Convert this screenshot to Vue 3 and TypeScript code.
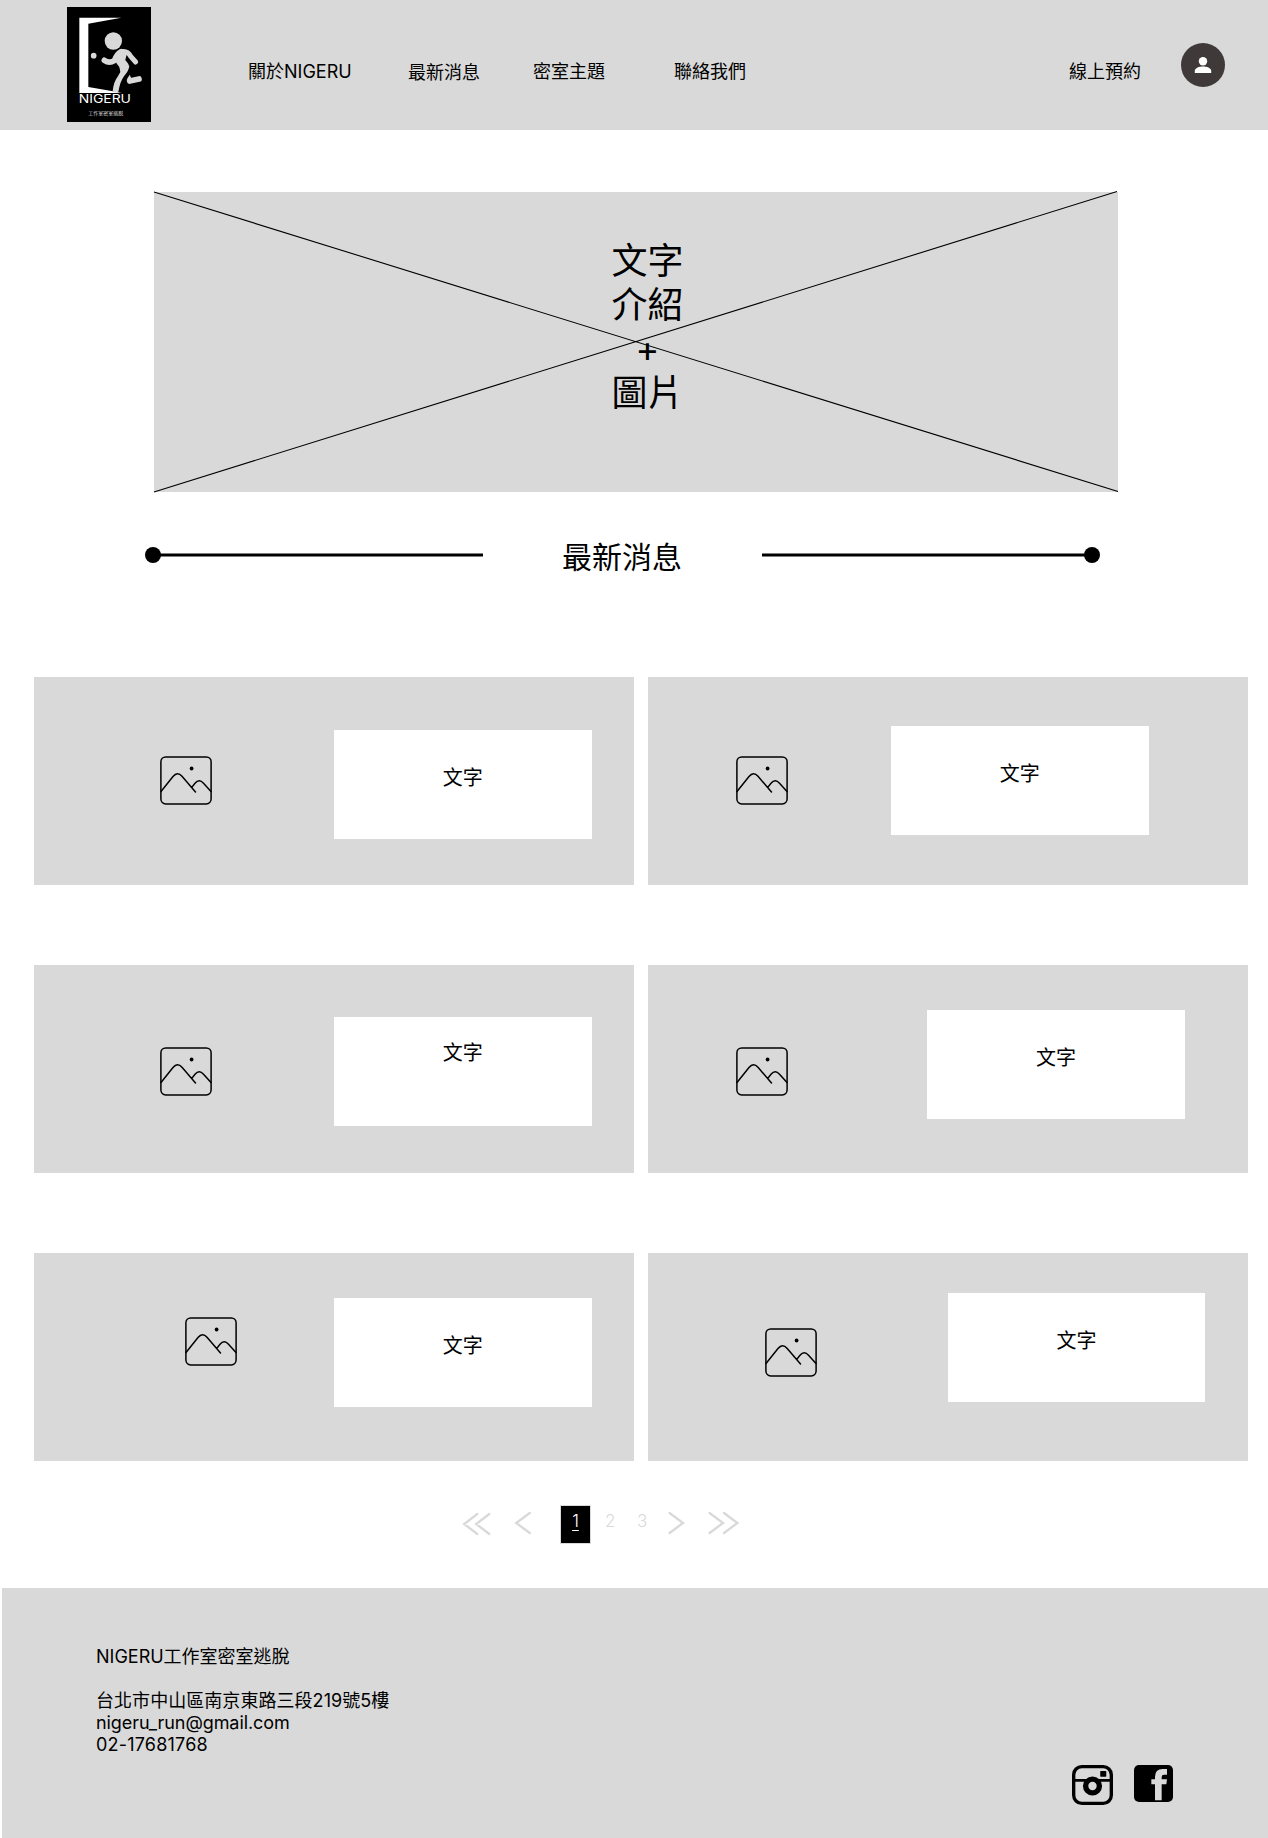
<script setup lang="ts">
interface NewsCard {
  id: string
  text: string
}

const navItems: string[] = ['關於NIGERU', '最新消息', '密室主題', '聯絡我們']
const introLines: string[] = ['文字', '介紹', '+', '圖片']
const cards: NewsCard[] = ['a', 'b', 'c', 'd', 'e', 'f'].map((id) => ({ id, text: '文字' }))
</script>

<template>
  <div class="page">
    <header class="header">
      <svg class="logo" viewBox="50 22 252 345" preserveAspectRatio="none">
        <rect x="50" y="22" width="252" height="345" fill="#000" />
        <path d="M87 54H213L114 72V262L188 275L214 280H87Z" fill="#fff" />
        <circle cx="130" cy="168" r="8.5" fill="#d9d9d9" />
        <circle cx="189" cy="124" r="26" fill="#d9d9d9" />
        <g fill="none" stroke="#d9d9d9" stroke-linecap="round" stroke-linejoin="round">
          <path d="M162 182Q177 192 192 183Q199 163 212 156" stroke-width="17" />
          <path d="M214 156Q232 153 241 170L256 187" stroke-width="15" />
          <path d="M216 162L210 184L222 199" stroke-width="27" />
          <path d="M238 244L266 238" stroke-width="17" />
        </g>
        <path d="M205 190L237 198Q236 212 222 228Q209 245 204 277Q196 281 187 275Q190 245 202 231L210 217Z" fill="#d9d9d9" />
        <path d="M229 240L238 225L245 240Z" fill="#d9d9d9" />
        <text class="logo-name" x="85" y="309" textLength="157" lengthAdjust="spacingAndGlyphs">NIGERU</text>
        <text class="logo-sub" x="114" y="347" textLength="105">工作室密室逃脫</text>
      </svg>
      <nav class="nav">
        <a v-for="item in navItems" :key="item">{{ item }}</a>
      </nav>
      <a class="booking">線上預約</a>
      <svg class="avatar" viewBox="0 0 44 44">
        <circle cx="22" cy="22" r="22" fill="#3f3a39" />
        <circle cx="22" cy="18.2" r="4.2" fill="#fff" />
        <path d="M13.8 30V27.8C13.8 24.8 18.5 23.4 22 23.4S30.2 24.8 30.2 27.8V30Z" fill="#fff" />
      </svg>
    </header>

    <main>
      <section class="hero">
        <svg class="cross" viewBox="0 0 964 300">
          <path d="M0 0L964 299.5M0 300L963 -0.5" stroke="#000" stroke-width="1.1" />
        </svg>
        <p v-for="line in introLines" :key="line">{{ line }}</p>
      </section>

      <div class="heading">
        <svg width="338" height="16" viewBox="0 0 338 16">
          <circle cx="8" cy="8" r="8" /><path d="M8 6.5H338V9.5H8Z" />
        </svg>
        <h1>最新消息</h1>
        <svg width="338" height="16" viewBox="0 0 338 16">
          <circle cx="330" cy="8" r="8" /><path d="M0 6.5H330V9.5H0Z" />
        </svg>
      </div>

      <section class="cards">
        <article v-for="card in cards" :key="card.id" class="card" :class="`card-${card.id}`">
          <svg class="picture" viewBox="0 0 52 49" fill="none" stroke="#000" stroke-width="1.5" stroke-linecap="round">
            <rect x="0.9" y="0.9" width="50.2" height="47" rx="4.8" />
            <path d="M1 35.5L13 20.5Q17.5 15 22 20.3L35.5 36M31.8 31.4L35 27.3Q39.2 22.4 43.5 27.2L51 35.5" />
            <circle cx="31.6" cy="12.5" r="1.9" fill="#000" stroke="none" />
          </svg>
          <div class="caption">{{ card.text }}</div>
        </article>
      </section>

      <nav class="pager">
        <svg class="first" width="30" height="24" viewBox="0 0 30 24"><path d="M15.3 2L2.2 12L15.3 22M27.3 2L14.2 12L27.3 22" /></svg>
        <svg class="prev" width="18" height="24" viewBox="0 0 18 24"><path d="M15.8 2L2.2 12L15.8 22" /></svg>
        <a class="num current"><span>1</span></a>
        <a class="num">2</a>
        <a class="num">3</a>
        <svg class="next" width="18" height="24" viewBox="0 0 18 24"><path d="M2.6 2L16 12L2.6 22" /></svg>
        <svg class="last" width="32" height="24" viewBox="0 0 32 24"><path d="M2.6 2L16 12L2.6 22M17 2L30.4 12L17 22" /></svg>
      </nav>
    </main>

    <footer class="footer">
      <address>
        NIGERU工作室密室逃脫<br /><br />
        <span class="street">台北市中山區南京東路三段219號5樓</span><br />
        <span class="email">nigeru_run@gmail.com</span><br />
        <span class="phone">02-17681768</span>
      </address>
      <div class="social">
        <svg width="41" height="40" viewBox="67 75 122 120" preserveAspectRatio="none">
          <rect x="72" y="80" width="112" height="110" rx="24" fill="none" stroke="#000" stroke-width="10" />
          <path d="M74 121H181" stroke="#000" stroke-width="8" />
          <rect x="151" y="93" width="18" height="17" rx="2" />
          <circle cx="128" cy="138" r="20.5" fill="#d9d9d9" stroke="#000" stroke-width="16" />
        </svg>
        <svg width="39" height="37" viewBox="252 75 117 110" preserveAspectRatio="none">
          <rect x="252" y="75" width="117" height="110" rx="15" />
          <path d="M315 180V132H304V117H315V110Q315 87 338 87H351V104H342Q335 104 335 111V117H351L349 132H335V180Z" fill="#d9d9d9" />
        </svg>
      </div>
    </footer>
  </div>
</template>

<style>
body {
  background: #fff;
}
</style>

<style scoped>
.page {
  width: 1268px;
  height: 1838px;
  overflow: hidden;
  display: flex;
  flex-direction: column;
  color: #000;
  font-family: Inter, "Noto Sans CJK TC", sans-serif;
  font-size: 18px;
  line-height: 22px;
}
svg {
  display: block;
  flex: none;
}
.header {
  height: 130px;
  display: flex;
  align-items: flex-start;
  background: #d9d9d9;
}
.logo {
  width: 84px;
  height: 115px;
  margin: 7.4px 0 0 66.6px;
}
.logo-name {
  font: 400 36px Inter, sans-serif;
  fill: #fff;
}
.logo-sub {
  font: 15px "Noto Sans CJK TC", sans-serif;
  fill: #ddd;
}
.nav {
  display: flex;
  margin: 61px 0 0 97.4px;
}
.nav a {
  white-space: nowrap;
}
.nav a:nth-child(1) { width: 160px; }
.nav a:nth-child(2) { width: 125px; padding-top: 1px; }
.nav a:nth-child(3) { width: 141px; }
.booking {
  margin: 61px 40px 0 auto;
}
.avatar {
  width: 44px;
  height: 44px;
  margin: 43px 43px 0 0;
}
.hero {
  position: relative;
  width: 964px;
  height: 300px;
  box-sizing: border-box;
  margin: 62px 0 0 154px;
  padding: 47px 0 0 23px;
  background: #d9d9d9;
  font-size: 36px;
  line-height: 44px;
  text-align: center;
}
.hero p {
  margin: 0;
}
.cross {
  position: absolute;
  inset: 0;
  width: 964px;
  height: 300px;
  overflow: visible;
}
.heading {
  display: flex;
  align-items: center;
  justify-content: space-between;
  width: 955px;
  height: 36px;
  margin: 45px 0 0 144.5px;
}
.heading svg {
  margin-top: 0.4px;
}
.heading h1 {
  margin: 3px 0 0;
  font-size: 30px;
  line-height: 36px;
  font-weight: 400;
}
.cards {
  display: grid;
  grid-template-columns: 600px 600px;
  gap: 80px 13.5px;
  margin: 103.5px 0 0 34px;
}
.card {
  height: 208px;
  display: flex;
  align-items: flex-start;
  background: #d9d9d9;
}
.picture {
  width: 52px;
  height: 49px;
}
.caption {
  flex: none;
  width: 257.6px;
  height: 109px;
  box-sizing: border-box;
  padding-top: 36px;
  background: #fff;
  font-size: 20px;
  line-height: 24px;
  text-align: center;
}
.card-a .picture { margin: 79.5px 122px 0 126px; }
.card-a .caption { margin-top: 53.5px; }
.card-b .picture { margin: 79.5px 103px 0 88.5px; }
.card-b .caption { margin-top: 49.5px; }
.card-c .picture { margin: 82.8px 122px 0 126px; }
.card-c .caption { margin-top: 52.5px; padding-top: 24px; }
.card-d .picture { margin: 82.8px 139.2px 0 88.5px; }
.card-d .caption { margin-top: 45.5px; }
.card-e .picture { margin: 64.5px 97px 0 151px; }
.card-e .caption { margin-top: 45.5px; }
.card-f .picture { margin: 75.5px 131px 0 117.2px; }
.card-f .caption { margin-top: 40.5px; }
.pager {
  display: flex;
  align-items: flex-start;
  margin: 44.5px 0 0 462px;
  height: 39px;
  color: #d9d9d9;
  font-size: 17px;
  font-weight: 300;
}
.pager svg {
  fill: none;
  stroke: #d9d9d9;
  stroke-width: 2.3;
  stroke-linecap: round;
}
.first { margin-top: 7px; }
.prev { margin: 6px 0 0 22px; }
.num {
  width: 10px;
  text-align: center;
  margin: 5px 0 0 15px;
}
.num + .num + .num { margin-left: 22px; }
.num.current {
  width: 31px;
  height: 39px;
  box-sizing: border-box;
  margin: 0 -1px 0 28px;
  padding-top: 4px;
  border: 1px solid #d9d9d9;
  background: #000;
  color: #fff;
}
.current span {
  text-decoration: underline;
  text-decoration-thickness: 1px;
  text-underline-offset: 3px;
}
.next { margin: 6px 0 0 20px; }
.last { margin: 6px 0 0 22px; }
.footer {
  flex: 1;
  display: flex;
  justify-content: space-between;
  box-sizing: border-box;
  margin: 44px 0 0 2px;
  padding: 58px 95px 0 94px;
  background: #d9d9d9;
}
address {
  font-style: normal;
}
.street { letter-spacing: 0.05px; }
.email { letter-spacing: -0.08px; }
.phone { letter-spacing: 0.2px; }
.social {
  display: flex;
  gap: 21px;
  padding-top: 119px;
}
</style>
